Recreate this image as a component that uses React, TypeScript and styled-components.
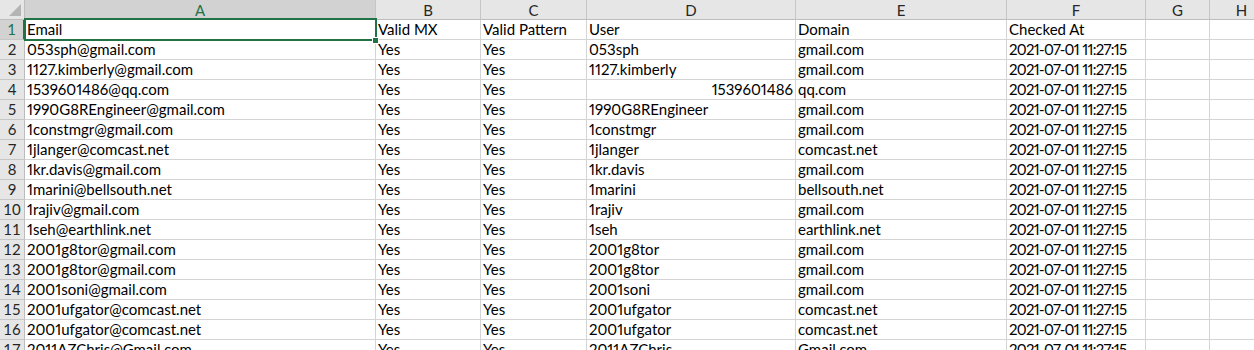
import React from "react";
import styled, { createGlobalStyle } from "styled-components";

const GlobalStyle = createGlobalStyle`
  html, body { margin: 0; padding: 0; background: #ffffff; }
  body { font-family: "Lato", "Liberation Sans", sans-serif; }
`;

const COLS = ["A", "B", "C", "D", "E", "F", "G", "H"];
const WIDTHS = [351, 105, 106, 209, 211, 139, 64, 64];

type Row = { email: string; user: string; domain: string; numeric?: boolean };

const rows: Row[] = [
  { email: "053sph@gmail.com", user: "053sph", domain: "gmail.com" },
  { email: "1127.kimberly@gmail.com", user: "1127.kimberly", domain: "gmail.com" },
  { email: "1539601486@qq.com", user: "1539601486", domain: "qq.com", numeric: true },
  { email: "1990G8REngineer@gmail.com", user: "1990G8REngineer", domain: "gmail.com" },
  { email: "1constmgr@gmail.com", user: "1constmgr", domain: "gmail.com" },
  { email: "1jlanger@comcast.net", user: "1jlanger", domain: "comcast.net" },
  { email: "1kr.davis@gmail.com", user: "1kr.davis", domain: "gmail.com" },
  { email: "1marini@bellsouth.net", user: "1marini", domain: "bellsouth.net" },
  { email: "1rajiv@gmail.com", user: "1rajiv", domain: "gmail.com" },
  { email: "1seh@earthlink.net", user: "1seh", domain: "earthlink.net" },
  { email: "2001g8tor@gmail.com", user: "2001g8tor", domain: "gmail.com" },
  { email: "2001g8tor@gmail.com", user: "2001g8tor", domain: "gmail.com" },
  { email: "2001soni@gmail.com", user: "2001soni", domain: "gmail.com" },
  { email: "2001ufgator@comcast.net", user: "2001ufgator", domain: "comcast.net" },
  { email: "2001ufgator@comcast.net", user: "2001ufgator", domain: "comcast.net" },
  { email: "2011AZChris@Gmail.com", user: "2011AZChris", domain: "Gmail.com" },
];

const Viewport = styled.div`
  position: relative;
  width: 1254px;
  height: 350px;
  overflow: hidden;
  background: #fff;
`;

const Sheet = styled.div`
  display: grid;
  grid-template-columns: 25px ${WIDTHS.map((w) => `${w}px`).join(" ")};
  grid-auto-rows: 20px;
  width: max-content;
`;

const Corner = styled.div`
  position: relative;
  background: #e6e6e6;
  border-right: 1px solid #bdbdbd;
  border-bottom: 1px solid #bdbdbd;
  box-sizing: border-box;
  &::after {
    content: "";
    position: absolute;
    right: 3px;
    bottom: 3px;
    width: 0;
    height: 0;
    border-left: 12px solid transparent;
    border-bottom: 12px solid #b4b4b4;
  }
`;

const ColHeader = styled.div<{ $active?: boolean }>`
  box-sizing: border-box;
  background: ${(p) => (p.$active ? "#d2d2d2" : "#e6e6e6")};
  border-right: 1px solid #c6c6c6;
  border-bottom: ${(p) => (p.$active ? "2px solid #217346" : "1px solid #bdbdbd")};
  color: ${(p) => (p.$active ? "#217346" : "#262626")};
  display: flex;
  align-items: center;
  justify-content: center;
  font-size: 15px;
  padding-top: ${(p) => (p.$active ? "1px" : "0")};
`;

const RowHeader = styled.div<{ $active?: boolean }>`
  box-sizing: border-box;
  background: ${(p) => (p.$active ? "#d2d2d2" : "#e6e6e6")};
  border-right: ${(p) => (p.$active ? "2px solid #217346" : "1px solid #bdbdbd")};
  border-bottom: 1px solid #c6c6c6;
  color: ${(p) => (p.$active ? "#217346" : "#262626")};
  display: flex;
  align-items: flex-end;
  justify-content: center;
  font-size: 15px;
  line-height: 17px;
  padding-bottom: 1px;
`;

const Cell = styled.div<{ $right?: boolean; $tight?: boolean }>`
  box-sizing: border-box;
  border-right: 1px solid #d4d4d4;
  border-bottom: 1px solid #d4d4d4;
  color: #000;
  display: flex;
  align-items: flex-end;
  justify-content: ${(p) => (p.$right ? "flex-end" : "flex-start")};
  padding: 0 2px 1px 2px;
  font-size: 15px;
  line-height: 17px;
  white-space: nowrap;
  overflow: visible;
  font-feature-settings: "pnum";
  letter-spacing: ${(p) => (p.$tight ? "-0.7px" : "0")};
`;

const Selection = styled.div`
  position: absolute;
  left: 24px;
  top: 18px;
  width: 353px;
  height: 23px;
  border: 2px solid #217346;
  box-sizing: border-box;
  pointer-events: none;
`;

const Handle = styled.div`
  position: absolute;
  left: 372px;
  top: 37px;
  width: 7px;
  height: 7px;
  background: #217346;
  border: 1px solid #fff;
  box-sizing: border-box;
`;

export default function App() {
  const header = ["Email", "Valid MX", "Valid Pattern", "User", "Domain", "Checked At", "", ""];
  return (
    <>
      <GlobalStyle />
      <Viewport>
        <Sheet>
          <Corner />
          {COLS.map((c, i) => (
            <ColHeader key={c} $active={i === 0}>
              {c}
            </ColHeader>
          ))}
          <RowHeader $active>1</RowHeader>
          {header.map((h, i) => (
            <Cell key={i}>{h}</Cell>
          ))}
          {rows.map((r, idx) => (
            <React.Fragment key={idx}>
              <RowHeader>{idx + 2}</RowHeader>
              <Cell>{r.email}</Cell>
              <Cell>Yes</Cell>
              <Cell>Yes</Cell>
              <Cell $right={r.numeric}>{r.user}</Cell>
              <Cell>{r.domain}</Cell>
              <Cell $tight>2021-07-01 11:27:15</Cell>
              <Cell />
              <Cell />
            </React.Fragment>
          ))}
        </Sheet>
        <Selection />
        <Handle />
      </Viewport>
    </>
  );
}
